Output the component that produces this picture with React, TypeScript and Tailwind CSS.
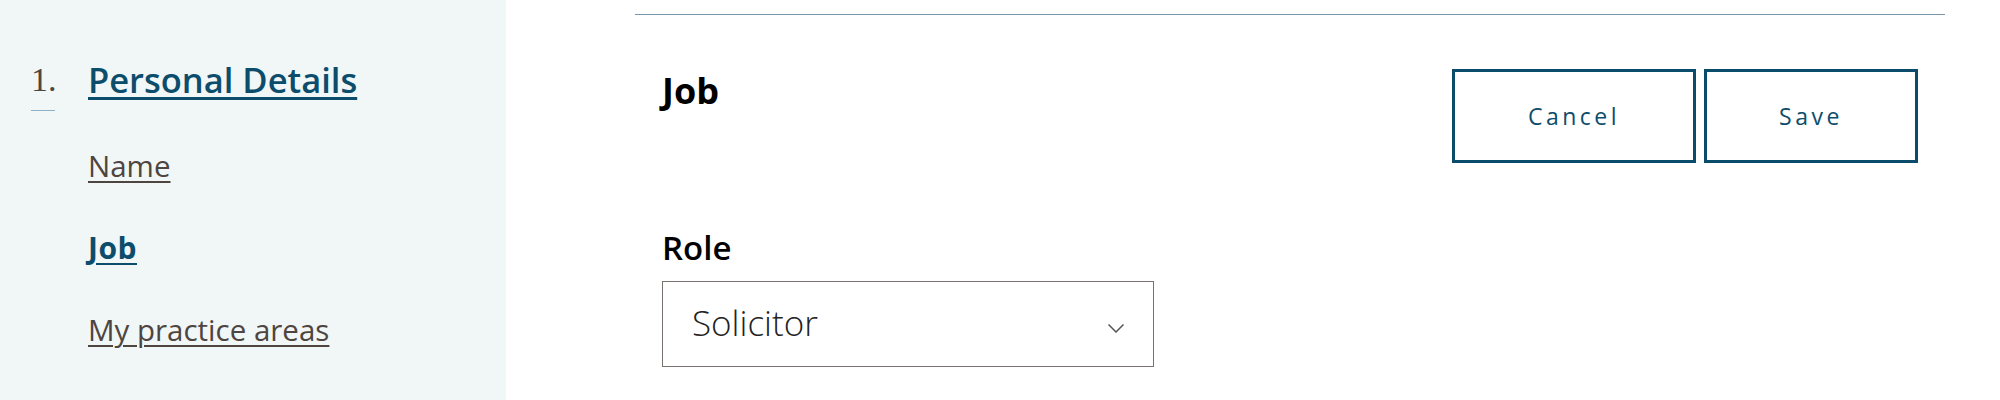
import React from "react";

export default function App() {
  return (
    <div className="flex w-[2000px] h-[400px] overflow-hidden bg-white font-['Open_Sans',sans-serif]">
      {/* Sidebar */}
      <aside className="w-[506px] shrink-0 bg-[#f1f6f7] pl-[31px] pt-[60px]">
        <div className="flex">
          <div className="w-[57px] shrink-0 flex flex-col">
            <span className="font-['Liberation_Serif',serif] text-[34px] leading-[40px] text-[#4e4540]">1.</span>
            <div className="mt-[10px] w-[24px] h-px bg-[#8db1c9]" />
          </div>
          <div className="flex flex-col">
            <a className="text-[34.5px] leading-[40px] font-semibold text-[#0c4d6c] underline decoration-[3px] underline-offset-[4px]">
              Personal Details
            </a>
            <ul className="mt-[46px] flex flex-col gap-[42px]">
              <li>
                <a className="text-[29.5px] leading-[40px] text-[#4e4540] underline decoration-[2px] underline-offset-[4px]">Name</a>
              </li>
              <li>
                <a className="text-[30px] leading-[40px] font-bold tracking-[0.5px] text-[#0c4d6c] underline decoration-[2px] underline-offset-[4px]">Job</a>
              </li>
              <li>
                <a className="text-[29.5px] leading-[40px] text-[#4e4540] underline decoration-[2px] underline-offset-[4px]">My practice areas</a>
              </li>
            </ul>
          </div>
        </div>
      </aside>

      {/* Main */}
      <main className="flex-1 pl-[129px] pr-[55px] pt-[14px]">
        <div className="h-px bg-[#7897ab]" />
        <div className="px-[27px]">
          <div className="mt-[54px] flex items-start justify-between">
            <h2 className="mt-[2px] text-[36px] leading-[40px] font-bold text-black">Job</h2>
            <div className="flex gap-[8px]">
              <button className="w-[244px] h-[94px] border-[3px] border-[#0b4c6b] bg-white text-[23px] font-medium tracking-[3.5px] text-[#0c4d6c] flex items-center justify-center">
                Cancel
              </button>
              <button className="w-[214px] h-[94px] border-[3px] border-[#0b4c6b] bg-white text-[23px] font-medium tracking-[3.5px] text-[#0c4d6c] flex items-center justify-center">
                Save
              </button>
            </div>
          </div>
          <label className="block mt-[65px] text-[33px] leading-[40px] font-semibold text-black">Role</label>
          <div className="mt-[13px] w-[492px] h-[86px] border border-[#777270] flex items-center justify-between pl-[29px] pr-[29px]">
            <span className="-mt-[3px] text-[35px] leading-[40px] font-light text-[#222]">Solicitor</span>
            <svg width="16" height="9" viewBox="0 0 16 9" className="mt-[8px]">
              <path d="M0.5 0.5 L8 8 L15.5 0.5" fill="none" stroke="#555" strokeWidth="1.5" />
            </svg>
          </div>
        </div>
      </main>
    </div>
  );
}
